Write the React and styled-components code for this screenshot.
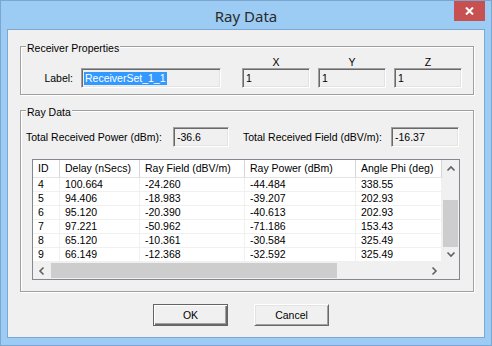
import React from 'react';
import styled, { createGlobalStyle, css } from 'styled-components';

const GlobalStyle = createGlobalStyle`
  html, body {
    margin: 0;
    padding: 0;
    background: #ffffff;
  }
  body {
    font-family: "Liberation Sans", Arial, sans-serif;
    font-size: 10.5px;
    color: #000000;
  }
`;

const sunken = css`
  box-sizing: border-box;
  border: 1px solid;
  border-color: #a0a0a0 #ffffff #ffffff #a0a0a0;
  box-shadow: inset 1px 1px 0 #696969, inset -1px -1px 0 #e3e3e3;
  background: #f0f0f0;
`;

const Window = styled.div`
  box-sizing: border-box;
  width: 492px;
  height: 346px;
  border: 1px solid #7aa6d1;
  background: #9ccbf4;
  display: flex;
  flex-direction: column;
`;

const TitleBar = styled.div`
  position: relative;
  height: 28px;
  display: flex;
  align-items: center;
  justify-content: center;
`;

const Title = styled.span`
  font-family: "Noto Sans", "Open Sans", sans-serif;
  font-size: 15px;
  color: #2b2b2b;
  margin-top: 1px;
`;

const CloseButton = styled.div`
  position: absolute;
  top: 0;
  right: 6px;
  width: 31px;
  height: 20px;
  background: #c75050;
  display: flex;
  align-items: center;
  justify-content: center;
`;

const Client = styled.div`
  flex: 1;
  margin: 0 6px 7px 6px;
  border: 1px solid #7ea8d3;
  background: #f0f0f0;
  display: flex;
  flex-direction: column;
`;

const Group = styled.div`
  position: relative;
  margin: ${p => p.$top}px 10px 0 12px;
  border: 1px solid #a0a0a0;
  box-shadow: inset 1px 1px 0 #ffffff, 1px 1px 0 #ffffff;
  padding: ${p => p.$pad};
`;

const Caption = styled.span`
  position: absolute;
  top: -5px;
  left: 5px;
  padding: 0 1px;
  line-height: 13px;
  background: #f0f0f0;
`;

const PropsRow = styled.div`
  display: flex;
  align-items: flex-end;
`;

const FieldLabel = styled.span`
  width: 52px;
  text-align: right;
  line-height: 20px;
  margin-right: 8px;
`;

const TextBox = styled.div`
  ${sunken};
  width: ${p => p.$w}px;
  height: 20px;
  padding: 2px 0 0 3px;
  line-height: 14px;
  white-space: nowrap;
`;

const Selected = styled.span`
  background: #3399ff;
  color: #ffffff;
  padding: 0 1px;
  margin-left: -1px;
  display: inline-block;
  line-height: 13px;
`;

const Coords = styled.div`
  display: flex;
  gap: 8px;
  margin-left: 21px;
`;

const Coord = styled.div`
  display: flex;
  flex-direction: column;
  align-items: center;
`;

const CoordHead = styled.span`
  line-height: 13px;
  margin-bottom: -1px;
`;

const TotalsRow = styled.div`
  display: flex;
  align-items: center;
  padding-left: 5px;
`;

const TotalLabel = styled.span`
  width: ${p => p.$w}px;
  white-space: nowrap;
`;

const Gap = styled.div`
  width: 14px;
`;

const List = styled.div`
  box-sizing: border-box;
  margin: 12px 0 0 11px;
  width: 428px;
  height: 121px;
  border: 1px solid #828790;
  background: #ffffff;
  display: grid;
  grid-template-columns: 409px 17px;
  grid-template-rows: 102px 17px;
`;

const Body = styled.div`
  overflow: hidden;
`;

const cols = '27px 80px 105px 111px 86px';

const HeaderRow = styled.div`
  display: grid;
  grid-template-columns: ${cols};
  height: 18px;
  background: #ffffff;
`;

const HeadCell = styled.div`
  box-sizing: border-box;
  border-right: 1px solid #d5d5d5;
  border-bottom: 1px solid #e5e5e5;
  padding-left: 5px;
  line-height: 17px;
  white-space: nowrap;
  overflow: hidden;
`;

const Row = styled.div`
  display: grid;
  grid-template-columns: ${cols};
  height: 14px;
`;

const Cell = styled.div`
  box-sizing: border-box;
  border-right: 1px solid #f0f0f0;
  border-bottom: 1px solid #f0f0f0;
  padding-left: 5px;
  line-height: 13px;
  white-space: nowrap;
  overflow: hidden;
`;

const VScroll = styled.div`
  background: #f0f0f0;
  display: flex;
  flex-direction: column;
`;

const HScroll = styled.div`
  background: #f0f0f0;
  display: flex;
`;

const ArrowBox = styled.div`
  width: 17px;
  height: 17px;
  flex: none;
  display: flex;
  align-items: center;
  justify-content: center;
`;

const Track = styled.div`
  flex: 1;
  position: relative;
`;

const Thumb = styled.div`
  position: absolute;
  background: #cdcdcd;
  ${p => (p.$vertical
    ? css`left: 1px; right: 1px;`
    : css`top: 1px; bottom: 1px;`)}
`;

const Corner = styled.div`
  background: #f0f0f0;
`;

const Buttons = styled.div`
  display: flex;
  gap: 26px;
  padding-left: 145px;
  margin-top: 12px;
`;

const Button = styled.div`
  box-sizing: border-box;
  width: 75px;
  height: 22px;
  display: flex;
  align-items: center;
  justify-content: center;
  background: #f0f0f0;
  border: 1px solid;
  ${p => (p.$default
    ? css`
        border-color: #646464;
        box-shadow: inset 1px 1px 0 #ffffff, inset -1px -1px 0 #696969, inset -2px -2px 0 #a0a0a0;
      `
    : css`
        border-color: #ffffff #696969 #696969 #ffffff;
        box-shadow: inset 1px 1px 0 #e3e3e3, inset -1px -1px 0 #a0a0a0;
      `)}
`;

const Chevron = ({ dir }) => {
  const paths = {
    up: 'M1.5 5.5 L5 2 L8.5 5.5',
    down: 'M1.5 2.5 L5 6 L8.5 2.5',
    left: 'M5.5 1.5 L2 5 L5.5 8.5',
    right: 'M2.5 1.5 L6 5 L2.5 8.5',
  };
  const vertical = dir === 'up' || dir === 'down';
  return (
    <svg width={vertical ? 10 : 8} height={vertical ? 8 : 10} viewBox={vertical ? '0 0 10 8' : '0 0 8 10'}>
      <path d={paths[dir]} fill="none" stroke="#606060" strokeWidth="1.6" />
    </svg>
  );
};

const headers = ['ID', 'Delay (nSecs)', 'Ray Field (dBV/m)', 'Ray Power (dBm)', 'Angle Phi (deg)'];

const rays = [
  ['4', '100.664', '-24.260', '-44.484', '338.55'],
  ['5', '94.406', '-18.983', '-39.207', '202.93'],
  ['6', '95.120', '-20.390', '-40.613', '202.93'],
  ['7', '97.221', '-50.962', '-71.186', '153.43'],
  ['8', '65.120', '-10.361', '-30.584', '325.49'],
  ['9', '66.149', '-12.368', '-32.592', '325.49'],
];

const App = () => (
  <>
    <GlobalStyle />
    <Window>
      <TitleBar>
        <Title>Ray Data</Title>
        <CloseButton>
          <svg width="9" height="8" viewBox="0 0 9 8">
            <path d="M1 0.5 L8 7.5 M8 0.5 L1 7.5" stroke="#ffffff" strokeWidth="2" />
          </svg>
        </CloseButton>
      </TitleBar>
      <Client>
        <Group $top={16} $pad="9px 0 6px 0">
          <Caption>Receiver Properties</Caption>
          <PropsRow>
            <FieldLabel>Label:</FieldLabel>
            <TextBox $w={140}>
              <Selected>ReceiverSet_1_1</Selected>
            </TextBox>
            <Coords>
              {['X', 'Y', 'Z'].map(axis => (
                <Coord key={axis}>
                  <CoordHead>{axis}</CoordHead>
                  <TextBox $w={68}>1</TextBox>
                </Coord>
              ))}
            </Coords>
          </PropsRow>
        </Group>
        <Group $top={15} $pad="16px 0 11px 0">
          <Caption>Ray Data</Caption>
          <TotalsRow>
            <TotalLabel $w={147}>Total Received Power (dBm):</TotalLabel>
            <TextBox $w={56}>-36.6</TextBox>
            <Gap />
            <TotalLabel $w={148}>Total Received Field (dBV/m):</TotalLabel>
            <TextBox $w={68}>-16.37</TextBox>
          </TotalsRow>
          <List>
            <Body>
              <HeaderRow>
                {headers.map(h => (
                  <HeadCell key={h}>{h}</HeadCell>
                ))}
              </HeaderRow>
              {rays.map(r => (
                <Row key={r[0]}>
                  {r.map((v, i) => (
                    <Cell key={i}>{v}</Cell>
                  ))}
                </Row>
              ))}
            </Body>
            <VScroll>
              <ArrowBox><Chevron dir="up" /></ArrowBox>
              <Track>
                <Thumb $vertical style={{ top: 23, height: 47 }} />
              </Track>
              <ArrowBox><Chevron dir="down" /></ArrowBox>
            </VScroll>
            <HScroll>
              <ArrowBox><Chevron dir="left" /></ArrowBox>
              <Track>
                <Thumb style={{ left: 1, width: 286 }} />
              </Track>
              <ArrowBox><Chevron dir="right" /></ArrowBox>
            </HScroll>
            <Corner />
          </List>
        </Group>
        <Buttons>
          <Button $default>OK</Button>
          <Button>Cancel</Button>
        </Buttons>
      </Client>
    </Window>
  </>
);

export default App;
